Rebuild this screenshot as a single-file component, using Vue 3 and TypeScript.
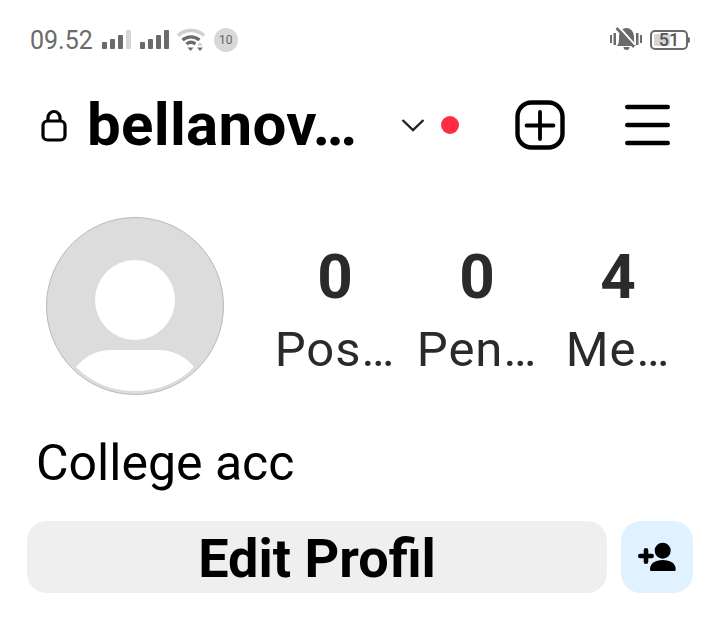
<template>
  <div class="page">
    <div class="status-bar">
      <div class="status-left">
        <span class="time">09.52</span>
        <svg class="signal" width="29" height="20" viewBox="0 0 29 20">
          <rect x="0" y="12" width="5" height="7" rx="1" fill="#6b6b6b" />
          <rect x="8" y="9" width="5" height="10" rx="1" fill="#6b6b6b" />
          <rect x="16" y="5" width="5" height="14" rx="1" fill="#6b6b6b" />
          <rect x="24" y="0" width="5" height="19" rx="1" fill="#d6d6d6" />
        </svg>
        <svg class="signal" width="29" height="20" viewBox="0 0 29 20">
          <rect x="0" y="12" width="5" height="7" rx="1" fill="#6b6b6b" />
          <rect x="8" y="9" width="5" height="10" rx="1" fill="#6b6b6b" />
          <rect x="16" y="5" width="5" height="14" rx="1" fill="#6b6b6b" />
          <rect x="24" y="0" width="5" height="19" rx="1" fill="#6b6b6b" />
        </svg>
        <svg class="wifi" width="30" height="24" viewBox="0 0 30 24" fill="none">
          <path d="M2 7.500C9.500 .8 20.500 .8 28 7.500" stroke="#cfcfcf" stroke-width="3.400" />
          <path d="M6.500 12C11.500 7.800 18.500 7.800 23.500 12" stroke="#6b6b6b" stroke-width="3.400" />
          <path d="M10.500 16C13.200 14 16.800 14 19.500 16" stroke="#6b6b6b" stroke-width="3.400" />
          <path d="M11.500 19.500h6l-3 3.500z" fill="#6b6b6b" />
          <path d="M24 14.500l3 3h-6z" fill="#cfcfcf" />
          <path d="M21 19.500h6l-3 3.500z" fill="#6b6b6b" />
        </svg>
        <span class="badge">10</span>
      </div>
      <div class="status-right">
        <svg class="bell" width="32" height="24" viewBox="0 0 32 24" fill="none">
          <rect x="0" y="8" width="2" height="8" fill="#6b6b6b" />
          <rect x="3.500" y="6" width="2.500" height="12" fill="#6b6b6b" />
          <rect x="26" y="6" width="2.500" height="12" fill="#6b6b6b" />
          <rect x="30" y="8" width="2" height="8" fill="#6b6b6b" />
          <path d="M7 19C9 17 9 14 9 10C9 5 12 1 16.500 1S24 5 24 10C24 14 24 17 26 19Z" fill="#6b6b6b" />
          <path d="M13.500 20h6a3 3 0 0 1-6 0Z" fill="#6b6b6b" />
          <path d="M9 0L25 18" stroke="#fff" stroke-width="2" />
          <path d="M6.500 1L24 20" stroke="#6b6b6b" stroke-width="2.600" />
        </svg>
        <div class="battery">
          <div class="battery-body">
            <div class="battery-fill"></div>
            <span class="battery-text">51</span>
          </div>
          <div class="battery-tip"></div>
        </div>
      </div>
    </div>

    <header class="top-bar">
      <svg class="lock" width="26" height="34" viewBox="0 0 26 34" fill="none" stroke="#000" stroke-width="3.200">
        <rect x="2" y="13" width="22" height="19" rx="4.500" />
        <path d="M7 13V9.500a6 6 0 0 1 12 0V13" />
      </svg>
      <h1 class="username">bellanov…</h1>
      <svg class="chevron" width="24" height="14" viewBox="0 0 24 14" fill="none">
        <path d="M1.500 2L12 12L22.500 2" stroke="#222" stroke-width="2.400" />
      </svg>
      <span class="dot"></span>
      <svg class="plus" width="50" height="50" viewBox="0 0 50 50" fill="none" stroke="#000" stroke-linecap="round">
        <rect x="2.500" y="2.500" width="45" height="45" rx="14" stroke-width="4.400" />
        <path d="M25 12V39M11.500 25.500H38.500" stroke-width="3.800" />
      </svg>
      <svg class="menu" width="45" height="42" viewBox="0 0 45 42" fill="none" stroke="#000" stroke-width="4.600" stroke-linecap="round">
        <path d="M2.300 3H42.700M2.300 21H42.700M2.300 39H42.700" />
      </svg>
    </header>

    <section class="profile">
      <svg class="avatar" width="178" height="178" viewBox="0 0 178 178">
        <circle cx="89" cy="89" r="88.500" fill="#dcdcdc" stroke="#b9b9b9" stroke-width="1" />
        <circle cx="89" cy="83" r="40" fill="#fff" />
        <path d="M30 150C38 140 50 133 66 133H112C128 133 140 140 148 150C132 166 112 174 89 174C66 174 46 166 30 150Z" fill="#fff" />
      </svg>
      <div class="stats">
        <div v-for="stat in stats" :key="stat.label" class="stat" :style="{ width: stat.width + 'px' }">
          <strong>{{ stat.value }}</strong>
          <span>{{ stat.label }}</span>
        </div>
      </div>
    </section>

    <p class="bio">College acc</p>

    <div class="actions">
      <button class="edit-btn">Edit Profil</button>
      <button class="add-btn" aria-label="Add person">
        <svg width="38" height="30" viewBox="0 0 38 30" fill="#000">
          <circle cx="24.700" cy="8.700" r="8" />
          <path d="M12 27.500C12 21.500 17 18 24.800 18S37.700 21.500 37.700 27.500C37.700 28.500 37 29 36 29H13.500C12.500 29 12 28.500 12 27.500Z" />
          <path d="M2.300 14H13.700M8 8.300V19.700" stroke="#000" stroke-width="4.600" stroke-linecap="round" />
        </svg>
      </button>
    </div>
  </div>
</template>

<script setup lang="ts">
interface Stat {
  value: number;
  label: string;
  width: number;
}

const stats: Stat[] = [
  { value: 0, label: "Pos…", width: 142 },
  { value: 0, label: "Pen…", width: 142 },
  { value: 4, label: "Me…", width: 140 },
];
</script>

<style scoped>
.page {
  width: 720px;
  height: 618px;
  overflow: hidden;
  background: #fff;
  font-family: Roboto, "Liberation Sans", sans-serif;
  color: #000;
}

.status-bar {
  display: flex;
  justify-content: space-between;
  align-items: center;
  height: 40px;
  margin-top: 20px;
  padding: 0 30px;
}

.status-left,
.status-right {
  display: flex;
  align-items: center;
}

.time {
  font-size: 25px;
  color: #6b6b6b;
}

.signal {
  margin-left: 9px;
}

.wifi {
  margin-left: 7px;
}

.badge {
  display: flex;
  align-items: center;
  justify-content: center;
  width: 24px;
  height: 24px;
  margin-left: 8px;
  border-radius: 50%;
  background: #d8d8d8;
  color: #666;
  font-size: 12px;
}

.bell {
  margin-top: -3px;
}

.battery {
  display: flex;
  align-items: center;
  margin-left: 8px;
}

.battery-body {
  position: relative;
  width: 34px;
  height: 16px;
  border: 2px solid #6b6b6b;
  border-radius: 5px;
}

.battery-fill {
  width: 16px;
  height: 12px;
  margin: 2px;
  border-radius: 2px;
  background: #d4d4d4;
}

.battery-text {
  position: absolute;
  inset: 0;
  text-align: center;
  font-size: 18px;
  font-weight: 500;
  line-height: 16px;
  color: #555;
}

.battery-tip {
  width: 2px;
  height: 6px;
  background: #6b6b6b;
  border-radius: 0 2px 2px 0;
}

.top-bar {
  display: flex;
  align-items: center;
  height: 70px;
  margin-top: 30px;
  padding-left: 41px;
}

.username {
  width: 301px;
  margin: 0 0 0 20px;
  font-size: 60px;
  font-weight: 700;
  letter-spacing: 0.3px;
  line-height: 70px;
  white-space: nowrap;
}

.chevron {
  margin-left: 13px;
}

.dot {
  width: 18px;
  height: 18px;
  margin-left: 16px;
  border-radius: 50%;
  background: #ff2d44;
}

.plus {
  margin-left: 56px;
}

.menu {
  margin-left: 60px;
}

.profile {
  display: flex;
  align-items: flex-start;
  margin-top: 57px;
  padding-left: 46px;
}

.stats {
  display: flex;
  margin-top: 30px;
  margin-left: 40px;
}

.stat {
  display: flex;
  flex-direction: column;
  align-items: center;
  gap: 13px;
}

.stat strong {
  font-size: 62px;
  font-weight: 700;
  line-height: 60px;
  color: #2a2a2a;
}

.stat span {
  font-size: 49px;
  line-height: 60px;
  letter-spacing: 1px;
  color: #2a2a2a;
}

.bio {
  margin: 38px 0 0;
  padding-left: 36px;
  font-size: 50px;
  line-height: 60px;
}

.actions {
  display: flex;
  gap: 14px;
  margin-top: 28px;
  padding-left: 27px;
}

.edit-btn {
  width: 580px;
  height: 72px;
  padding: 3px 0 0;
  border: 0;
  border-radius: 20px;
  background: #efefef;
  color: #000;
  font-family: inherit;
  font-size: 54px;
  font-weight: 700;
}

.add-btn {
  display: flex;
  align-items: center;
  justify-content: center;
  width: 72px;
  height: 72px;
  padding: 0;
  border: 0;
  border-radius: 20px;
  background: #e0f1ff;
}
</style>
